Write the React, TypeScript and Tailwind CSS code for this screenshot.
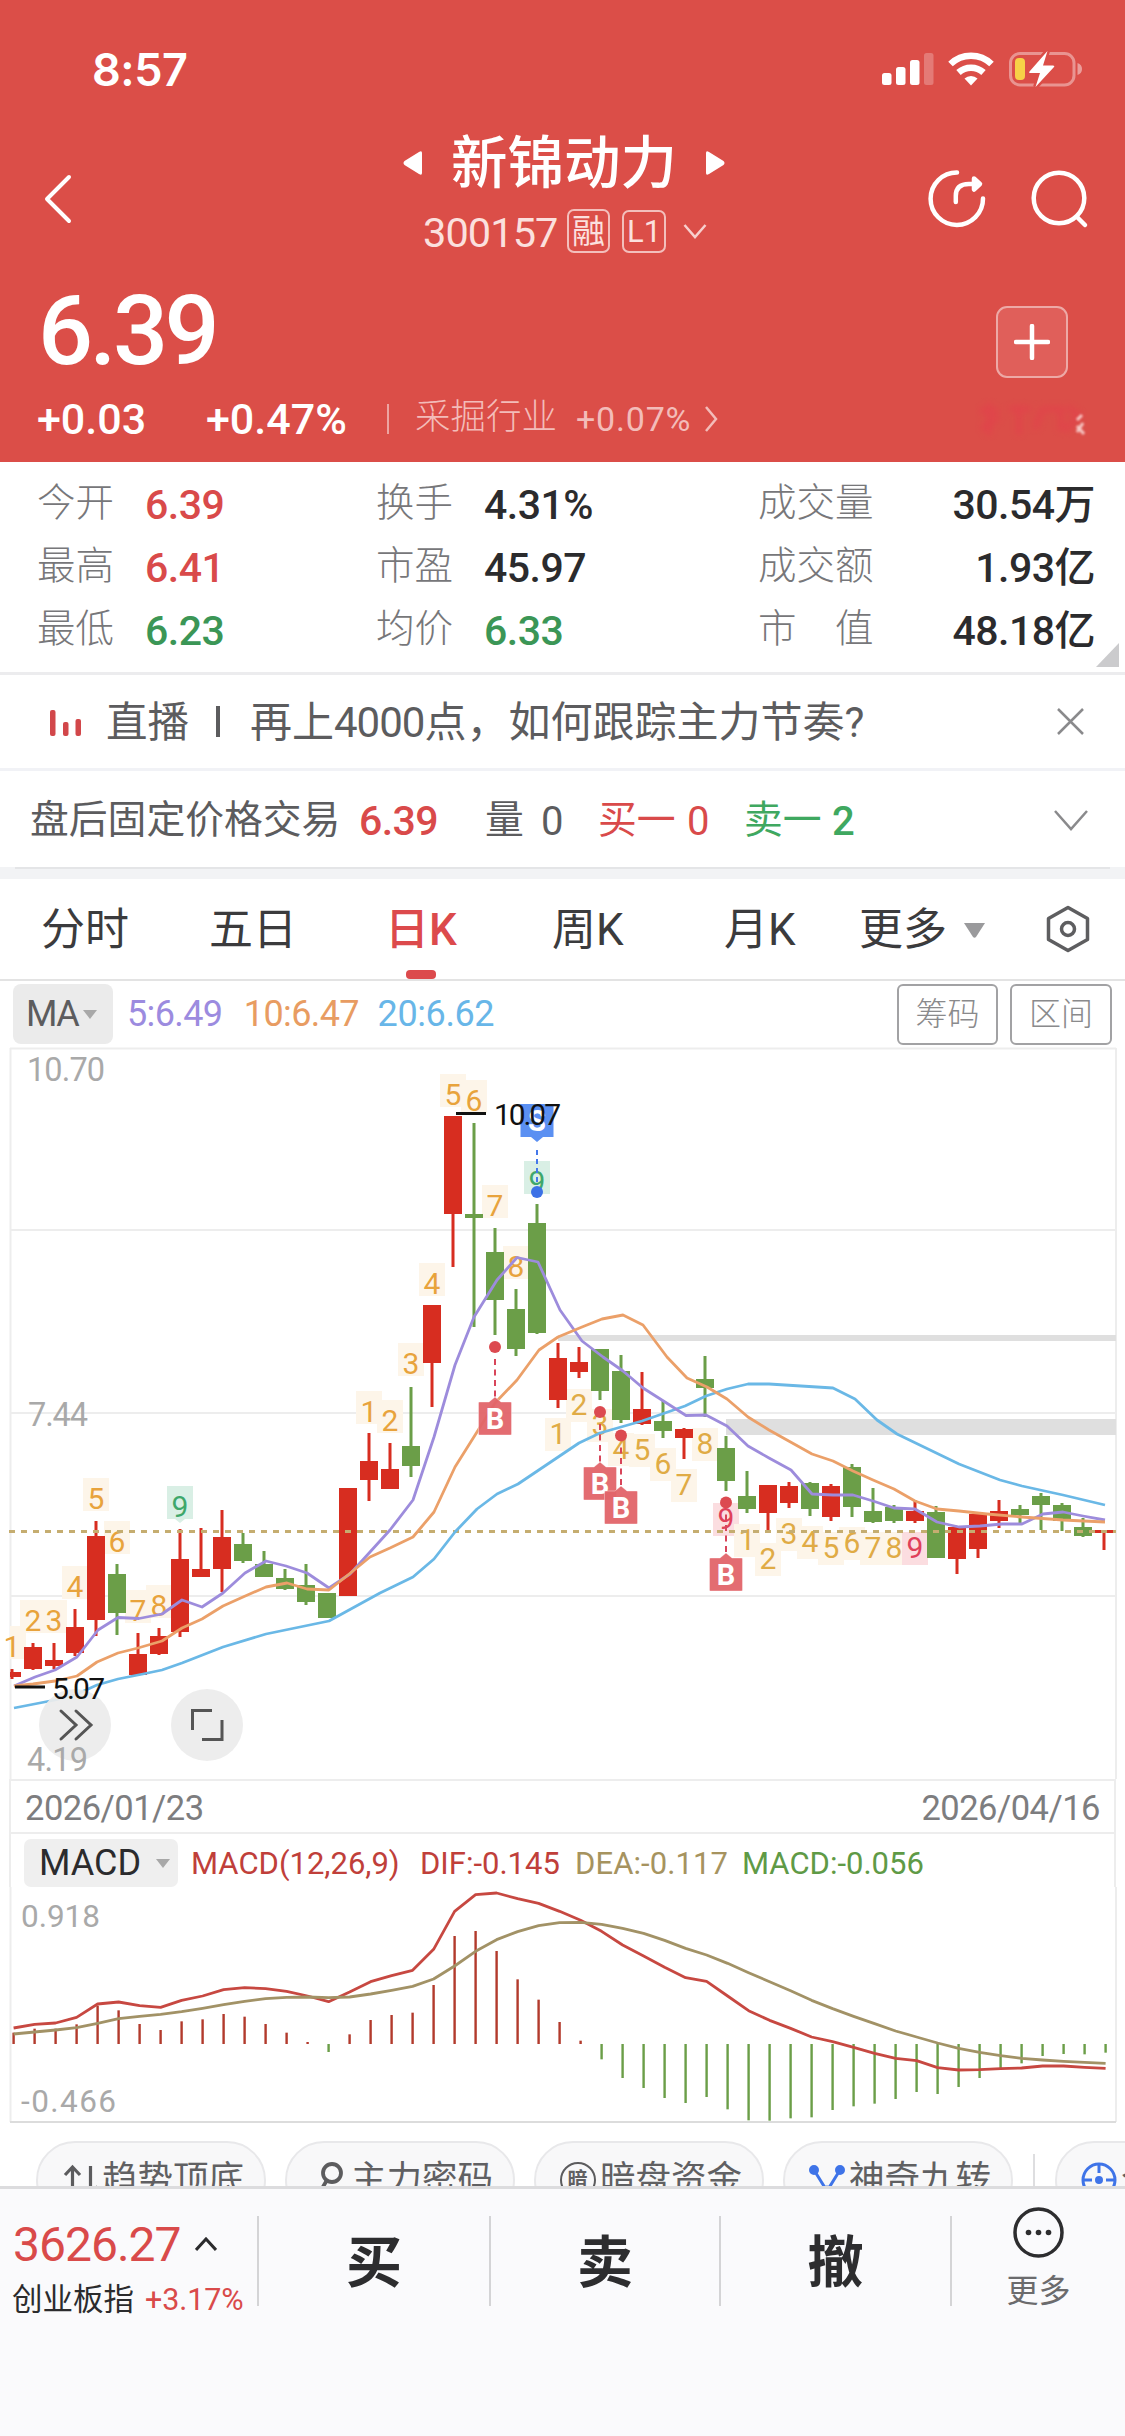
import React from 'react';

type Candle = [number, number, number, number, number];

const RED = '#d72d20';
const GREEN = '#6b9e48';

/* direction (1 up, 0 down), high, body top, body bottom, low */
const candles: Candle[] = [
  [1, 1669, 1672, 1677, 1679], [1, 1643, 1647, 1669, 1670], [1, 1643, 1660, 1666, 1669], [1, 1609, 1627, 1653, 1656],
  [1, 1521, 1536, 1620, 1636], [0, 1564, 1574, 1613, 1635], [1, 1633, 1654, 1675, 1675], [1, 1628, 1636, 1654, 1655],
  [1, 1529, 1559, 1632, 1637], [1, 1528, 1569, 1577, 1577], [1, 1510, 1537, 1569, 1592], [0, 1533, 1544, 1561, 1563],
  [0, 1551, 1564, 1577, 1577], [0, 1569, 1578, 1589, 1590], [0, 1564, 1585, 1602, 1605], [0, 1593, 1593, 1618, 1618],
  [1, 1488, 1488, 1596, 1596], [1, 1433, 1461, 1480, 1501], [1, 1443, 1469, 1489, 1489], [0, 1387, 1446, 1466, 1477],
  [1, 1305, 1305, 1363, 1407], [1, 1116, 1116, 1214, 1267], [0, 1123, 1214, 1218, 1327], [0, 1228, 1252, 1300, 1335],
  [0, 1289, 1309, 1349, 1356], [0, 1204, 1223, 1333, 1334], [1, 1343, 1358, 1400, 1408], [1, 1347, 1362, 1372, 1378],
  [0, 1349, 1349, 1391, 1400], [0, 1355, 1371, 1420, 1423], [1, 1372, 1409, 1424, 1425], [0, 1401, 1421, 1431, 1438],
  [1, 1428, 1429, 1438, 1459], [0, 1356, 1379, 1388, 1417], [0, 1436, 1448, 1481, 1491], [0, 1471, 1496, 1509, 1513],
  [1, 1485, 1485, 1513, 1530], [1, 1482, 1486, 1503, 1508], [0, 1482, 1483, 1509, 1516], [1, 1484, 1486, 1517, 1521],
  [0, 1464, 1467, 1507, 1517], [0, 1488, 1511, 1522, 1523], [0, 1505, 1507, 1521, 1523], [1, 1500, 1511, 1521, 1523],
  [0, 1506, 1512, 1558, 1558], [1, 1527, 1527, 1559, 1574], [1, 1513, 1514, 1549, 1558], [1, 1500, 1511, 1521, 1528],
  [0, 1505, 1509, 1515, 1524], [0, 1493, 1496, 1505, 1530], [0, 1503, 1505, 1521, 1531], [0, 1518, 1527, 1536, 1537],
  [1, 1530, 1530, 1533, 1550],
];

const ma5 =
  '14,1686 35,1677 55,1670 77,1657 98,1630 118,1617.5 139,1618.5 162,1614 182,1600 202,1607 223,1593 245,1573 266,1561 286,1566 307,1573 329,1588 350,1574 370,1552 390,1530 413,1500 434,1437 455,1365 474,1317 497,1280 517,1257.5 538,1262 560,1310 582,1341 603,1357 623,1371 643,1388 665,1402 686,1415.5 706,1415 727,1426 748,1446 769,1458 791,1470 812,1494 833,1495 853,1495 873,1501 894,1508 915,1509 937,1522 959,1527 980,1526 1002,1524 1022,1524 1043,1514 1063,1512 1083,1516 1105,1520';
const ma10 =
  '14,1686 33,1684 55,1681 77,1676 97,1662 118,1653 138,1648 162,1641 182,1628 202,1619 223,1606 243,1597 266,1587 287,1583 307,1589 329,1590 348,1575 370,1557 390,1548 413,1537 434,1512 455,1467 477,1432 495,1403 517,1380 539,1350 558,1337 582,1327 602,1319 623,1315 643,1325 667,1357 687,1378 707,1387 727,1399 748,1417 769,1430 812,1454 833,1461 853,1471 873,1480 894,1489 915,1501 937,1509 959,1511 987,1514 1022,1517 1063,1520 1105,1522';
const ma20 =
  '14,1708 55,1700 75,1695 97,1685 118,1679 143,1674 162,1670 182,1663 223,1647 266,1634 329,1621 380,1593 413,1577 434,1559 455,1532 477,1509 497,1494 518,1484 579,1443 600,1433 642,1421 665,1413 685,1406 706,1396 727,1389 748,1384 769,1384 833,1388 855,1399 877,1420 897,1434 959,1464 1000,1480 1022,1486 1063,1495 1105,1505';

/* candle index, digit, top of digit, kind: a above, b below, g green, r red */
const tags: [number, string, number, string][] = [
  [0, '1', 1636, 'a'], [1, '2', 1610, 'a'], [2, '3', 1610, 'a'], [3, '4', 1576, 'a'], [4, '5', 1488, 'a'],
  [5, '6', 1531, 'a'], [6, '7', 1600, 'a'], [7, '8', 1595, 'a'], [8, '9', 1496, 'g'], [17, '1', 1401, 'a'],
  [18, '2', 1410, 'a'], [19, '3', 1353, 'a'], [20, '4', 1273, 'a'], [21, '5', 1084, 'a'], [22, '6', 1090, 'a'],
  [23, '7', 1195, 'a'], [24, '8', 1256, 'a'], [25, '9', 1171, 'g'], [26, '1', 1423, 'b'], [27, '2', 1394, 'b'],
  [28, '3', 1414, 'b'], [29, '4', 1438, 'b'], [30, '5', 1439, 'b'], [31, '6', 1453, 'b'], [32, '7', 1474, 'b'],
  [33, '8', 1433, 'b'], [34, '9', 1508, 'r'], [35, '1', 1529, 'b'], [36, '2', 1548, 'b'], [37, '3', 1523, 'b'],
  [38, '4', 1531, 'b'], [39, '5', 1537, 'b'], [40, '6', 1532, 'b'], [41, '7', 1537, 'b'], [42, '8', 1537, 'b'],
  [43, '9', 1537, 'r'],
];

const tagFill: Record<string, string> = { a: '#fdf5e9', b: '#fdf5e9', g: '#d9efe5', r: '#fbdde0' };
const tagInk: Record<string, string> = { a: '#e8a33c', b: '#e0ab45', g: '#3fa76b', r: '#e0405a' };

const hist = [
  878, 866, 866, 853, 797, 811, 852, 870, 844, 838, 822, 830, 852, 878, 906, 936, 883, 840, 825, 818, 735, 588, 573,
  633, 718, 779, 846, 902, 958, 1014, 1044, 1074, 1089, 1071, 1108, 1141, 1142, 1135, 1132, 1110, 1099, 1091, 1077,
  1056, 1062, 1041, 1014, 988, 970, 948, 942, 943, 938,
];
const dif = [
  864, 853, 849, 832, 792, 786, 797, 802, 781, 768, 749, 743, 746, 754, 768, 785, 756, 725, 707, 691, 628, 514, 464,
  459, 476, 490, 514, 541, 574, 615, 648, 682, 713, 724, 768, 812, 841, 865, 891, 905, 922, 940, 955, 962, 983, 990,
  989, 986, 984, 978, 978, 982, 985,
];
const dea = [
  882, 876, 870, 863, 850, 836, 829, 823, 815, 805, 794, 784, 776, 772, 771, 773, 771, 762, 751, 739, 717, 678, 634,
  599, 575, 557, 548, 547, 553, 565, 580, 601, 625, 645, 670, 698, 725, 752, 781, 806, 829, 851, 873, 891, 909, 925,
  937, 947, 955, 960, 964, 967, 970,
];

const cx = (i: number) => 12 + 21 * i;
const mx = (i: number) => 13.6 + 21 * i;
const line = (values: number[]) => values.map((v, i) => `${mx(i)},${1740 + v / 3}`).join(' ');

function Signal({ x, dot, top }: { x: number; dot: number; top: number }) {
  return (
    <g>
      <line x1={x} x2={x} y1={dot + 12} y2={top - 4} stroke="#d8455a" strokeWidth="2" strokeDasharray="6 4.5" />
      <circle cx={x} cy={dot} r="6" fill="#dc4a50" />
      <path
        d={`M${x - 15.5} ${top}h9.500l6-5 6 5h9.500q1 0 1 1v31q0 1-1 1h-31q-1 0-1-1v-31q0-1 1-1z`}
        fill="#e26469"
        fillOpacity="0.95"
        stroke="#fff"
        strokeOpacity="0.6"
        strokeWidth="0.6"
      />
      <text x={x} y={top + 26.5} textAnchor="middle" fontSize="29" fontWeight="700" fill="#fff">
        B
      </text>
    </g>
  );
}

function PriceChart() {
  return (
    <svg className="block h-[732px] w-[1125px] shrink-0" viewBox="0 1047 1125 732" fontFamily="Roboto, sans-serif">
      <g stroke="#ededed" strokeWidth="2">
        <path d="M10 1048.500H1116M10 1230H1116M10 1413H1116M10 1596H1116" />
        <path d="M10.500 1048V1779M1116 1048V1779" />
      </g>
      <rect x="558" y="1335" width="558" height="6" fill="#dfdfdf" />
      <rect x="726" y="1419" width="390" height="16" fill="#dfdfdf" />
      <g fill="#a9a9a9" fontSize="32.500">
        <text x="27" y="1081" textLength="78">10.70</text>
        <text x="28" y="1426" textLength="60">7.44</text>
      </g>
      {tags.map(([i, , top, kind]) => {
        const y = kind === 'a' || kind === 'g' ? top - 10 : top - 5;
        return (
          <g key={i} fill={tagFill[kind]}>
            <rect x={Math.max(cx(i) - 13, 10)} y={y} width={i === 0 ? 16 : 26} height="33" />
            {kind === 'g' && <path d={`M${cx(i) - 5} ${y + 33}l5 4 5-4z`} />}
          </g>
        );
      })}
      <g fontSize="30" textAnchor="middle">
        {tags.map(([i, digit, top, kind]) => (
          <text key={i} x={cx(i)} y={top + 21} fill={tagInk[kind]}>
            {digit}
          </text>
        ))}
      </g>
      {candles.map(([up, high, top, bottom, low], i) => (
        <g key={i} fill={up ? RED : GREEN}>
          <rect x={cx(i) - 1.5} y={high} width="3" height={low - high} />
          <rect x={Math.max(cx(i) - 9, 10)} y={top} width={i === 0 ? 11 : 18} height={bottom - top} />
        </g>
      ))}
      <line x1="9" x2="1116" y1="1531.500" y2="1531.500" stroke="#c5ad70" strokeWidth="3" strokeDasharray="6 6" />
      <g fill="none" strokeWidth="2.800" strokeLinejoin="round">
        <polyline points={ma20} stroke="#6ab8e6" />
        <polyline points={ma5} stroke="#9d8cdc" />
        <polyline points={ma10} stroke="#eba069" />
      </g>
      <Signal x={495} dot={1347} top={1402} />
      <Signal x={600} dot={1412} top={1467} />
      <Signal x={621} dot={1435.5} top={1491} />
      <Signal x={726} dot={1502.5} top={1558} />
      <line x1="537" x2="537" y1="1150" y2="1184" stroke="#4478ea" strokeWidth="2" strokeDasharray="5 4" />
      <circle cx="537" cy="1192" r="6" fill="#3c71e6" />
      <path d="M520.500 1104h33v33h-10.500l-6 5-6-5h-10.500z" fill="#5b90f2" />
      <text x="537" y="1131" textAnchor="middle" fontSize="29" fontWeight="700" fill="#fff">S</text>
      <g fill="#ebebeb" fillOpacity="0.92">
        <circle cx="75" cy="1725" r="36" />
        <circle cx="207" cy="1725" r="36" />
      </g>
      <text x="27" y="1771" fontSize="32.500" fill="#a9a9a9" textLength="61">4.19</text>
      <g stroke="#111" strokeWidth="3">
        <path d="M456 1113.500H486M15 1687H45" />
      </g>
      <g fontSize="30" fill="#111">
        <text x="494" y="1125" textLength="67">10.07</text>
        <text x="52" y="1699" textLength="53">5.07</text>
      </g>
      <g fill="none" stroke="#555" strokeWidth="3">
        <path d="M61 1711l15 14-15 14M76 1711l15 14-15 14" strokeLinecap="round" />
        <path d="M192.500 1730V1710.500H212M202 1739.500H222V1720" />
      </g>
    </svg>
  );
}

function MacdChart() {
  return (
    <svg className="block h-[236px] w-[1125px] shrink-0" viewBox="0 1887 1125 236" fontFamily="Roboto, sans-serif">
      <path d="M10.500 1887V2122M1116 1887V2122" stroke="#ededed" strokeWidth="2" />
      <path d="M10 2122H1116" stroke="#dcdcdc" strokeWidth="2" />
      <g fill="#a9a9a9" fontSize="31.500">
        <text x="21" y="1926.500" textLength="79">0.918</text>
        <text x="21" y="2111.500" textLength="95">-0.466</text>
      </g>
      {hist.map((v, i) => {
        const y = 1740 + v / 3;
        return (
          <rect key={i} x={mx(i) - 1.2} y={Math.min(y, 2044)} width="2.400" height={Math.abs(y - 2044)} fill={v < 912 ? '#b23a2c' : '#6b9e48'} />
        );
      })}
      <g fill="none" strokeWidth="2.800" strokeLinejoin="round">
        <polyline points={line(dif)} stroke="#c74841" />
        <polyline points={line(dea)} stroke="#a29266" />
      </g>
    </svg>
  );
}

function Stat({ label, value, tone, cols, end }: { label: string; value: string; tone: string; cols: string; end?: boolean }) {
  return (
    <div className={`grid items-center ${cols}`}>
      <span className="pb-[3px] text-[38.500px] font-light text-[#77777a] whitespace-pre">{label}</span>
      <span className={`pt-[2px] text-[41px] font-medium tracking-[-0.500px] ${tone} ${end ? 'text-right' : 'pl-[1px]'}`}>{value}</span>
    </div>
  );
}

function Pill({ icon, label }: { icon: React.ReactNode; label: string }) {
  return (
    <div className="flex h-[78px] w-[230px] shrink-0 items-center rounded-full border-2 border-[#e8e8ea] bg-[#f8f8f9] pl-[21px] text-[35.500px] text-[#606062]">
      <span className="flex w-[43px] shrink-0 justify-center pr-[2px]">{icon}</span>
      {label}
    </div>
  );
}

export default function App() {
  return (
    <div className="flex h-[2436px] w-[1125px] flex-col overflow-hidden bg-white leading-none whitespace-nowrap font-[Roboto,'Noto_Sans_CJK_SC',sans-serif]">
      <header className="h-[462px] shrink-0 bg-[#db4e48] text-white">
        <div className="flex h-[122px] items-end justify-between pl-[92px] pr-[43px]">
          <span className="mb-[30px] font-[Inter,sans-serif] text-[45px] font-semibold tracking-[-0.500px]">8:57</span>
          <svg className="mb-[34px] h-[38px] w-[201px]" viewBox="881 50 201 38">
            <g fill="#fff">
              <rect x="882" y="73" width="9.500" height="12" rx="2.500" />
              <rect x="896" y="67" width="9.500" height="18" rx="2.500" />
              <rect x="910" y="60" width="9.500" height="25" rx="2.500" />
              <rect x="924" y="53" width="9.500" height="32" rx="2.500" opacity="0.25" />
            </g>
            <g fill="none" stroke="#fff" strokeWidth="6.500">
              <path d="M950.500 64a29.500 29.500 0 0 1 41 0" />
              <path d="M958.500 72.500a18.500 18.500 0 0 1 25 0" />
            </g>
            <path d="M971 85.500l-6.500-7a9.500 9.500 0 0 1 13 0z" fill="#fff" />
            <rect x="1010.500" y="53.500" width="63.500" height="31.500" rx="9.500" fill="none" stroke="#fff" strokeOpacity="0.4" strokeWidth="3" />
            <path d="M1077.500 63q4.500 1.500 4.500 6t-4.500 6z" fill="#fff" fillOpacity="0.45" />
            <rect x="1015" y="58" width="10" height="22" rx="4" fill="#f7d147" />
            <path d="M1047.500 51l-18 20.500q-1 1.500 1 1.500h9.500l-4.500 14 18.500-20q1-1.500-1-1.500h-10z" fill="#fff" stroke="#db4e48" strokeWidth="5" paintOrder="stroke" />
          </svg>
        </div>
        <div className="flex h-[150px] items-start">
          <svg className="ml-[42px] mt-[51px] h-[52px] w-[32px]" viewBox="0 0 32 52" fill="none" stroke="#fff" strokeWidth="4" strokeLinecap="round" strokeLinejoin="round">
            <path d="M27 4L5 26l22 22" />
          </svg>
          <div className="ml-[315px] flex w-[350px] flex-col items-center">
            <div className="mt-[9px] flex h-[64px] items-center">
              <svg className="mb-[1px] h-[24px] w-[19px]" viewBox="0 0 19 24" fill="#fff"><path d="M19 2v20q0 3-3 1L1.500 14q-2-2 0-4L16 1q3-2 3 1z" /></svg>
              <h1 className="mr-[29px] ml-[29px] pt-[2px] text-[56.500px] font-medium">新锦动力</h1>
              <svg className="mb-[1px] h-[24px] w-[19px]" viewBox="0 0 19 24" fill="#fff"><path d="M0 2v20q0 3 3 1l14.500-9q2-2 0-4L3 1Q0-1 0 2z" /></svg>
            </div>
            <div className="mt-[13px] flex h-[46px] w-[286px] items-center text-[#fbe0de]">
              <span className="w-[149px] pl-[2px] pt-[4px] text-[41.500px] tracking-[-0.900px]">300157</span>
              <span className="flex h-[44px] w-[43px] shrink-0 items-center justify-center rounded-[7px] border-2 border-[#f3bfbc] text-[33px]">融</span>
              <span className="ml-[12px] flex h-[43px] w-[44px] shrink-0 items-center justify-center rounded-[7px] border-2 border-[#f3bfbc] text-[31px]">L1</span>
              <svg className="ml-[17px] h-[16px] w-[24px] shrink-0" viewBox="0 0 24 16" fill="none" stroke="#f7cfcd" strokeWidth="2.500"><path d="M1.500 2L12 14 22.500 2" /></svg>
            </div>
          </div>
          <svg className="ml-[188px] mt-[45px] h-[64px] w-[164px]" viewBox="927 167 164 64" fill="none" stroke="#fff" strokeWidth="4.500" strokeLinecap="round" strokeLinejoin="round">
            <path d="M957 172.500a26.200 26.200 0 1 0 26 26" />
            <path d="M955.800 202v-6q0-12 13-12h9" />
            <path d="M974 178.500l6 5.500-6 5.500z" fill="#fff" />
            <circle cx="1059" cy="198" r="25.300" />
            <path d="M1077 217l8 8" />
          </svg>
        </div>
        <div className="flex h-[120px] items-start justify-between pl-[38px] pr-[57px]">
          <span className="mt-[11px] text-[97px] font-medium tracking-[-3.600px]">6.39</span>
          <span className="mt-[34px] flex h-[72px] w-[72px] items-center justify-center rounded-[11px] border-2 border-[#eda9a6] bg-[#e05f5a]">
            <svg className="h-[36px] w-[36px]" viewBox="0 0 36 36" stroke="#fff" strokeWidth="4.500" strokeLinecap="round"><path d="M2 18H34M18 2V34" /></svg>
          </span>
        </div>
        <div className="flex h-[54px] items-center pl-[37px] text-[43px] font-medium">
          <span className="w-[169px]">+0.03</span>
          <span className="w-[181px]">+0.47%</span>
          <span className="h-[30px] w-[2px] bg-[#eda4a1]" />
          <span className="ml-[26px] w-[161px] pb-[2px] text-[35.500px] font-light text-[#f3bcb9]">采掘行业</span>
          <span className="w-[128px] text-[34px] font-normal tracking-[0.800px] text-[#f3bcb9]">+0.07%</span>
          <svg className="h-[28px] w-[14px]" viewBox="0 0 14 28" fill="none" stroke="#f3bcb9" strokeWidth="2.500"><path d="M2 2l10 12L2 26" /></svg>
          <svg className="ml-[257px] h-[44px] w-[112px]" viewBox="0 0 112 44">
            <g fill="none" stroke="#e43f4c" strokeWidth="6" opacity="0.6" className="blur-[3px]">
              <path d="M4 14h20M14 6v32M6 32l18-12M34 12h22M44 8v30M60 32l8-22M70 12h16v22M92 10l12 8-14 16" />
            </g>
            <path d="M107 18l-5 5M102 29l7 8M108 26l-6 9" fill="none" stroke="#f6c9c6" strokeWidth="3" className="blur-[1px]" />
          </svg>
        </div>
      </header>

      <section className="relative h-[213px] shrink-0 border-b-[3px] border-[#ececee] pr-[30px] pl-[37px] pt-[11px]">
        <div className="grid h-[189px] grid-cols-[339px_382px_1fr] grid-rows-3">
          <Stat label="今开" value="6.39" tone="text-[#d94a4a]" cols="grid-cols-[107px_1fr]" />
          <Stat label="换手" value="4.31%" tone="text-[#2b2b2d]" cols="grid-cols-[107px_1fr]" />
          <Stat label="成交量" value="30.54万" tone="text-[#2b2b2d]" cols="grid-cols-[118px_1fr]" end />
          <Stat label="最高" value="6.41" tone="text-[#d94a4a]" cols="grid-cols-[107px_1fr]" />
          <Stat label="市盈" value="45.97" tone="text-[#2b2b2d]" cols="grid-cols-[107px_1fr]" />
          <Stat label="成交额" value="1.93亿" tone="text-[#2b2b2d]" cols="grid-cols-[118px_1fr]" end />
          <Stat label="最低" value="6.23" tone="text-[#3b9656]" cols="grid-cols-[107px_1fr]" />
          <Stat label="均价" value="6.33" tone="text-[#3b9656]" cols="grid-cols-[107px_1fr]" />
          <Stat label="市　值" value="48.18亿" tone="text-[#2b2b2d]" cols="grid-cols-[118px_1fr]" end />
        </div>
        <svg className="absolute right-[6px] bottom-[5px] h-[24px] w-[23px]" viewBox="0 0 23 24" fill="#cbcbcd"><path d="M23 0V24H0z" /></svg>
      </section>

      <section className="flex h-[96px] shrink-0 items-center border-b-[3px] border-[#f1f2f6] text-[42px] text-[#5c5c5e]">
        <svg className="ml-[50px] mt-[2px] h-[26px] w-[32px]" viewBox="0 0 32 26" fill="#d2474a">
          <rect x="0" width="5.500" height="26" rx="2" /><rect x="13" y="12" width="5.500" height="14" rx="2" /><rect x="25.500" y="9" width="5.500" height="17" rx="2" />
        </svg>
        <span className="ml-[24px] w-[110px] pt-[3px] text-[41.500px]">直播</span>
        <span className="h-[31px] w-[4px] bg-[#5c5c5e]" />
        <span className="ml-[30px] w-[807px] pt-[3px]">再上<span className="tracking-[-1px]">4000</span>点，如何跟踪主力节奏?</span>
        <svg className="h-[27px] w-[27px]" viewBox="0 0 27 27" stroke="#8a8a8c" strokeWidth="2.500"><path d="M1 1L26 26M26 1L1 26" /></svg>
      </section>

      <section className="flex h-[96px] shrink-0 items-center pl-[30px] pt-[2px] text-[38.800px] text-[#5c5c5e]">
        <span className="w-[329px]">盘后固定价格交易</span>
        <span className="w-[126px] pt-[2px] text-[41px] font-medium tracking-[-0.600px] text-[#d94a4a]">6.39</span>
        <span className="w-[56px]">量</span>
        <span className="w-[57px] pt-[3px] text-[40px]">0</span>
        <span className="w-[89px] text-[#d94a4a]">买一</span>
        <span className="w-[57px] pt-[3px] text-[40px] text-[#d94a4a]">0</span>
        <span className="w-[88px] text-[#3fa860]">卖一</span>
        <span className="w-[222px] pt-[3px] text-[40px] font-medium text-[#3fa860]">2</span>
        <svg className="h-[21px] w-[34px]" viewBox="0 0 34 21" fill="none" stroke="#8a8a8c" strokeWidth="2.500"><path d="M1 1l16 18L33 1" /></svg>
      </section>
      <div className="h-[12px] shrink-0 bg-[#f2f3f5] px-[15px]"><div className="h-[2px] bg-[#e4e5e7]" /></div>

      <nav className="flex h-[102px] shrink-0 items-center border-b-[2px] border-[#e3e3e3] pl-[41px] text-[44px] text-[#3b3b3d]">
        <span className="w-[168px] pt-[2px]">分时</span>
        <span className="w-[177px] pt-[2px]">五日</span>
        <span className="flex h-full w-[70px] flex-col items-center font-medium text-[#dc4a4c]">
          <span className="flex h-[91px] items-center pt-[10px]">日K</span>
          <span className="h-[9px] w-[30px] rounded-[4px] bg-[#dc4a4c]" />
        </span>
        <span className="ml-[96px] w-[172px] pt-[2px]">周K</span>
        <span className="w-[135px] pt-[2px]">月K</span>
        <span className="w-[105px] pt-[2px]">更多</span>
        <svg className="mt-[2px] h-[15px] w-[21px] shrink-0" viewBox="0 0 21 15" fill="#9a9a9c"><path d="M0 0H21L12 14q-1.500 1.500-3 0z" /></svg>
        <svg className="ml-[61px] h-[48px] w-[44px] shrink-0" viewBox="0 0 44 48" fill="none" stroke="#5e5e60" strokeWidth="3.500" strokeLinejoin="round">
          <path d="M22 2.500L41.500 13.500V34.500L22 45.500 2.500 34.500V13.500z" /><circle cx="22" cy="24" r="6.500" />
        </svg>
      </nav>

      <div className="flex h-[66px] shrink-0 items-center pl-[13px] pr-[13px] text-[36px]">
        <span className="flex h-[60px] w-[100px] items-center rounded-[8px] bg-[#ebebeb] pl-[13px] text-[#5c5c5e]">
          <span className="w-[57px] text-[36px] tracking-[-1.500px]">MA</span>
          <svg className="h-[9px] w-[14px]" viewBox="0 0 14 9" fill="#a8a8a8"><path d="M0 0H14L7 9z" /></svg>
        </span>
        <span className="ml-[14px] w-[117px] tracking-[-0.600px] text-[#9c8bdf]">5:6.49</span>
        <span className="w-[134px] tracking-[-0.600px] text-[#e89c62]">10:6.47</span>
        <span className="w-[520px] tracking-[-0.400px] text-[#68b6e8]">20:6.62</span>
        <span className="flex h-[61px] w-[101px] shrink-0 items-center justify-center rounded-[6px] border-2 border-[#a2a2a4] text-[32px] font-light text-[#8a8a8c]">筹码</span>
        <span className="ml-[12px] flex h-[61px] w-[102px] shrink-0 items-center justify-center rounded-[6px] border-2 border-[#a2a2a4] text-[32px] font-light text-[#8a8a8c]">区间</span>
      </div>

      <PriceChart />
      <div className="mx-[9px] flex h-[55px] shrink-0 items-center justify-between border-2 border-[#ededed] pl-[14px] pr-[14px] pt-[3px] text-[34.500px] tracking-[-0.500px] text-[#7d7d7f]">
        <span>2026/01/23</span><span>2026/04/16</span>
      </div>
      <div className="mx-[9px] flex h-[53px] shrink-0 items-end border-x-2 border-[#ededed] pl-[13px] text-[31px] leading-[46px]">
        <span className="flex h-[48px] w-[154px] items-center rounded-[7px] bg-[#efefef] pl-[15px] text-[#2b2b2d]">
          <span className="w-[117px] text-[36px]">MACD</span>
          <svg className="h-[9px] w-[14px]" viewBox="0 0 14 9" fill="#a8a8a8"><path d="M0 0H14L7 9z" /></svg>
        </span>
        <span className="ml-[13px] w-[229px] text-[#c03f3a]">MACD(12,26,9)</span>
        <span className="w-[155px] text-[#c03f3a]">DIF:-0.145</span>
        <span className="w-[167px] tracking-[0.100px] text-[#a6935f]">DEA:-0.117</span>
        <span className="text-[#5f9a46]">MACD:-0.056</span>
      </div>
      <MacdChart />

      <div className="flex h-[63px] shrink-0 items-start overflow-hidden pl-[36px] pt-[18px]">
        <Pill label="趋势顶底" icon={<svg className="h-[34px] w-[34px]" viewBox="0 0 34 34" fill="none" stroke="#5c5c5e" strokeWidth="3.200"><path d="M9.500 34V4M2 12l7.500-8L17 12M27.500 3V31M27.500 31l8-8" /></svg>} />
        <span className="w-[19px] shrink-0" />
        <Pill label="主力密码" icon={<svg className="h-[38px] w-[30px]" viewBox="0 0 30 38" fill="none" stroke="#5c5c5e" strokeWidth="3.800"><circle cx="18" cy="12" r="9" /><path d="M13 19L3 36M7 27l7 4" /></svg>} />
        <span className="w-[19px] shrink-0" />
        <Pill label="暗盘资金" icon={<span className="flex h-[36px] w-[36px] items-center justify-center rounded-full border-2 border-[#5c5c5e] text-[20px] font-bold">暗</span>} />
        <span className="w-[19px] shrink-0" />
        <Pill label="神奇九转" icon={<svg className="h-[34px] w-[36px]" viewBox="0 0 36 34" fill="#3f74e8" stroke="#3f74e8" strokeWidth="3"><path d="M5 7L18 28 31 7" fill="none" /><circle cx="5" cy="7" r="3.500" /><circle cx="31" cy="7" r="3.500" /><circle cx="18" cy="28" r="4" /></svg>} />
        <span className="ml-[20px] mr-[20px] mt-[13px] h-[50px] w-[2px] shrink-0 bg-[#dedee0]" />
        <Pill label="个股诊断" icon={<svg className="h-[36px] w-[36px]" viewBox="0 0 36 36" fill="none" stroke="#3f74e8" strokeWidth="3"><circle cx="18" cy="18" r="16" /><path d="M18 2v9M18 25v9M2 18h9M25 18h9" /><circle cx="18" cy="18" r="2.500" fill="#3f74e8" /></svg>} />
      </div>

      <footer className="flex flex-1 items-start border-t-[3px] border-[#dcdcde] bg-[#fafafc]">
        <div className="mt-[27px] flex h-[90px] w-[259px] flex-col justify-between border-r-2 border-[#d4d4d6]">
          <div className="mt-[5px] flex items-center pl-[13px] text-[48px] text-[#d94a4a]">
            <span className="w-[182px] tracking-[-1px]">3626.27</span>
            <svg className="mb-[3px] h-[14px] w-[22px]" viewBox="0 0 22 14" fill="none" stroke="#2b2b2d" strokeWidth="3"><path d="M1 13L11 2l10 11" /></svg>
          </div>
          <div className="-mb-[9px] flex items-center pl-[12px] text-[30.500px] text-[#2b2b2d]">
            <span className="w-[133px]">创业板指</span>
            <span className="tracking-[-0.100px] text-[#d94a4a]">+3.17%</span>
          </div>
        </div>
        <button className="mt-[27px] h-[90px] w-[232px] border-r-2 border-[#d4d4d6] pt-[4px] text-[56px] font-bold text-[#2d2d2f]">买</button>
        <button className="mt-[27px] h-[90px] w-[230px] border-r-2 border-[#d4d4d6] pt-[4px] text-[56px] font-bold text-[#2d2d2f]">卖</button>
        <button className="mt-[27px] h-[90px] w-[231px] border-r-2 border-[#d4d4d6] pt-[4px] text-[56px] font-bold text-[#2d2d2f]">撤</button>
        <div className="mt-[18px] flex flex-1 flex-col items-center text-[32px] text-[#6b6b6d]">
          <svg className="h-[51px] w-[51px]" viewBox="0 0 51 51" fill="#2d2d2f"><circle cx="25.500" cy="25.500" r="23.500" fill="none" stroke="#2d2d2f" strokeWidth="3.500" /><circle cx="15.500" cy="25.500" r="2.800" /><circle cx="25.500" cy="25.500" r="2.800" /><circle cx="35.500" cy="25.500" r="2.800" /></svg>
          <span className="mt-[17px]">更多</span>
        </div>
      </footer>
    </div>
  );
}
